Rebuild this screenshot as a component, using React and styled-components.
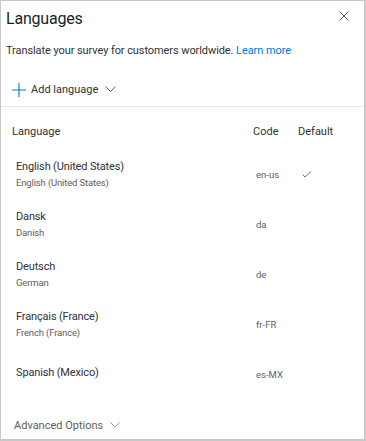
import React from "react";
import styled, { createGlobalStyle } from "styled-components";

const Global = createGlobalStyle`
  html, body { margin: 0; padding: 0; background: #fff; }
  body { font-family: Roboto, "Noto Sans", sans-serif; color: #323130; }
  * { box-sizing: border-box; }
`;

const Panel = styled.div`
  width: 366px;
  height: 441px;
  border-style: solid;
  border-color: #c8c8c8;
  border-width: 1px 2px 2px 1px;
  display: flex;
  flex-direction: column;
  background: #fff;
`;

const Header = styled.div`
  display: flex;
  align-items: flex-start;
  justify-content: space-between;
  padding: 6px 10px 0 5px;
  height: 41px;
`;

const Title = styled.h1`
  margin: 0;
  font-size: 16px;
  font-weight: 400;
  letter-spacing: -0.2px;
  line-height: 24px;
  color: #201f1e;
`;

const IconButton = styled.button`
  border: none;
  background: none;
  padding: 0;
  margin-top: -1px;
  width: 20px;
  height: 20px;
  display: flex;
  align-items: center;
  justify-content: center;
  color: #605e5c;
`;

const Description = styled.p`
  margin: 0;
  padding: 0 5px;
  font-size: 11px;
  letter-spacing: -0.08px;
  line-height: 18px;
  color: #323130;
`;

const Link = styled.a`
  color: #0078d4;
  text-decoration: none;
`;

const Toolbar = styled.div`
  display: flex;
  align-items: center;
  height: 47px;
  padding: 13px 0 0 11px;
  border-bottom: 1px solid #edebe9;
`;

const CommandButton = styled.button`
  display: flex;
  align-items: center;
  gap: 5px;
  border: none;
  background: none;
  padding: 0;
  font-family: inherit;
  font-size: 11px;
  color: #323130;
`;

const ChevronWrap = styled.span`
  display: flex;
  margin-left: ${(p) => p.$gap || 2}px;
`;

const Table = styled.div`
  display: flex;
  flex-direction: column;
  padding: 0 0 0 11px;
`;

const HeaderRow = styled.div`
  display: grid;
  grid-template-columns: 241px 45px 1fr;
  align-items: center;
  height: 42px;
  padding-top: 6px;
  font-size: 11px;
  color: #323130;
`;

const Row = styled.div`
  display: grid;
  grid-template-columns: 241px 45px 1fr;
  align-items: center;
  height: 50px;
`;

const NameCell = styled.div`
  display: flex;
  flex-direction: column;
  padding-left: 4px;
  gap: 2px;
  margin-top: ${(p) => (p.$single ? -4 : 0)}px;
`;

const Name = styled.span`
  font-size: 11px;
  letter-spacing: -0.15px;
  line-height: 15px;
  color: #323130;
`;

const Sub = styled.span`
  font-size: 9.5px;
  letter-spacing: -0.15px;
  line-height: 13px;
  color: #605e5c;
`;

const Code = styled.span`
  font-size: 9.5px;
  color: #605e5c;
  padding-left: 3px;
`;

const Check = styled.span`
  display: flex;
  padding-left: 4px;
  color: #605e5c;
`;

const Footer = styled.div`
  margin-top: auto;
  padding: 0 0 0 13px;
  height: 28px;
  display: flex;
  align-items: center;
`;

const FooterButton = styled.button`
  display: flex;
  align-items: center;
  gap: 6px;
  border: none;
  background: none;
  padding: 0;
  font-family: inherit;
  font-size: 11px;
  color: #605e5c;
`;

const Chevron = ({ size = 11, color = "#605e5c" }) => (
  <svg width={size} height={size * 0.6} viewBox="0 0 11 6.5" fill="none">
    <path d="M0.5 0.5 L5.5 5.5 L10.5 0.5" stroke={color} strokeWidth="1" />
  </svg>
);

const languages = [
  { name: "English (United States)", sub: "English (United States)", code: "en-us", def: true },
  { name: "Dansk", sub: "Danish", code: "da" },
  { name: "Deutsch", sub: "German", code: "de" },
  { name: "Français (France)", sub: "French (France)", code: "fr-FR" },
  { name: "Spanish (Mexico)", code: "es-MX" },
];

export default function App() {
  return (
    <>
      <Global />
      <Panel>
        <Header>
          <Title>Languages</Title>
          <IconButton aria-label="Close">
            <svg width="10" height="10" viewBox="0 0 10 10">
              <path d="M0.5 0.5 L9.5 9.5 M9.5 0.5 L0.5 9.5" stroke="#605e5c" strokeWidth="1" />
            </svg>
          </IconButton>
        </Header>
        <Description>
          Translate your survey for customers worldwide. <Link href="#">Learn more</Link>
        </Description>
        <Toolbar>
          <CommandButton>
            <svg width="14" height="14" viewBox="0 0 14 14">
              <path d="M7 0 V14 M0 7 H14" stroke="#0078d4" strokeWidth="1.1" />
            </svg>
            <span>Add language</span>
            <ChevronWrap $gap={2}>
              <Chevron />
            </ChevronWrap>
          </CommandButton>
        </Toolbar>
        <Table>
          <HeaderRow>
            <span>Language</span>
            <span>Code</span>
            <span>Default</span>
          </HeaderRow>
          {languages.map((l) => (
            <Row key={l.code}>
              <NameCell $single={!l.sub}>
                <Name>{l.name}</Name>
                {l.sub && <Sub>{l.sub}</Sub>}
              </NameCell>
              <Code>{l.code}</Code>
              <Check>
                {l.def && (
                  <svg width="10" height="7" viewBox="0 0 10 7" fill="none">
                    <path d="M0.5 3.5 L3 6 L9 0.5" stroke="#605e5c" strokeWidth="0.9" />
                  </svg>
                )}
              </Check>
            </Row>
          ))}
        </Table>
        <Footer>
          <FooterButton>
            <span>Advanced Options</span>
            <ChevronWrap $gap={1}>
              <Chevron size={10} color="#8a8886" />
            </ChevronWrap>
          </FooterButton>
        </Footer>
      </Panel>
    </>
  );
}
